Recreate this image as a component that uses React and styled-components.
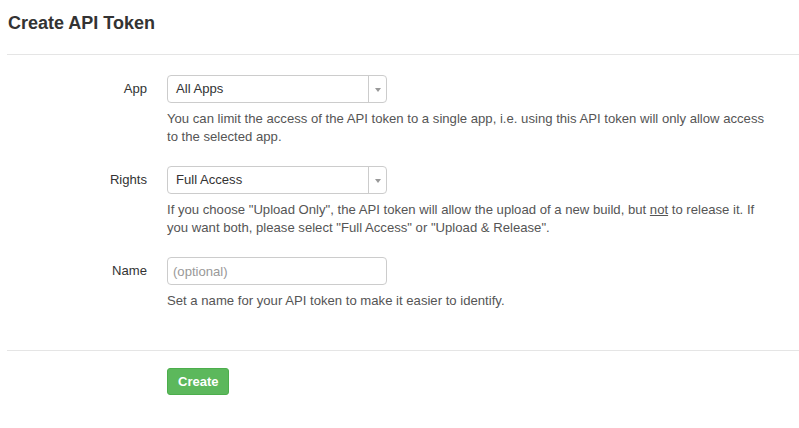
import React from "react";
import styled, { createGlobalStyle } from "styled-components";

const Global = createGlobalStyle`
  html, body { margin: 0; padding: 0; background: #fff; }
  body { font-family: "Liberation Sans", Arial, Helvetica, sans-serif; color: #333; font-size: 13px; }
  * { box-sizing: border-box; }
`;

const Page = styled.div`
  padding: 13px 0 40px 7px;
`;

const Title = styled.h1`
  margin: 0 0 0 1px;
  font-size: 18px;
  line-height: 20px;
  font-weight: bold;
  color: #333;
`;

const Rule = styled.hr`
  margin: ${(p) => p.$top}px 0 0 0;
  border: 0;
  border-top: 1px solid #e5e5e5;
  height: 0;
`;

const Form = styled.div`
  display: flex;
  flex-direction: column;
  gap: 20px;
  padding-top: 20px;
`;

const Group = styled.div`
  display: grid;
  grid-template-columns: 140px 610px;
  column-gap: 20px;
`;

const Label = styled.label`
  text-align: right;
  line-height: 28px;
  font-size: 13.1px;
  color: #333;
`;

const Control = styled.div`
  display: flex;
  flex-direction: column;
  gap: 7px;
`;

const Select = styled.div`
  width: 220px;
  height: 28px;
  border: 1px solid #ccc;
  border-radius: 4px;
  display: flex;
  align-items: stretch;
  background: #fff;
`;

const SelectValue = styled.span`
  flex: 1;
  padding-left: 8px;
  line-height: 26px;
  font-size: 13.1px;
  color: #333;
`;

const Arrow = styled.span`
  width: 18px;
  border-left: 1px solid #ccc;
  display: flex;
  align-items: center;
  justify-content: center;
  &::after {
    content: "";
    border-left: 3px solid transparent;
    border-right: 3px solid transparent;
    border-top: 4px solid #999;
    margin-top: 1px;
  }
`;

const Input = styled.input`
  width: 220px;
  height: 28px;
  border: 1px solid #ccc;
  border-radius: 4px;
  padding: 0 5px;
  font-family: inherit;
  font-size: 13.1px;
  color: #333;
  outline: none;
  &::placeholder { color: #999; }
`;

const Help = styled.p`
  margin: 0;
  font-size: 13.13px;
  line-height: 18px;
  color: #555;
`;

const Under = styled.span`
  text-decoration: underline;
`;

const Actions = styled.div`
  padding: 17px 0 0 160px;
`;

const Button = styled.button`
  height: 27px;
  padding: 0 10px;
  border: 1px solid #4cae4c;
  border-radius: 3px;
  background: #5cb85c;
  color: #fff;
  font-family: inherit;
  font-size: 13px;
  font-weight: bold;
  cursor: pointer;
`;

export default function App() {
  return (
    <>
      <Global />
      <Page>
        <Title>Create API Token</Title>
        <Rule $top={21} />
        <Form>
          <Group>
            <Label>App</Label>
            <Control>
              <Select>
                <SelectValue>All Apps</SelectValue>
                <Arrow />
              </Select>
              <Help>
                You can limit the access of the API token to a single app, i.e. using this API token will only allow access to the selected app.
              </Help>
            </Control>
          </Group>
          <Group>
            <Label>Rights</Label>
            <Control>
              <Select>
                <SelectValue>Full Access</SelectValue>
                <Arrow />
              </Select>
              <Help>
                If you choose "Upload Only", the API token will allow the upload of a new build, but <Under>not</Under> to release it. If you want both, please select "Full Access" or "Upload &amp; Release".
              </Help>
            </Control>
          </Group>
          <Group>
            <Label>Name</Label>
            <Control>
              <Input placeholder="(optional)" />
              <Help>Set a name for your API token to make it easier to identify.</Help>
            </Control>
          </Group>
        </Form>
        <Rule $top={40} />
        <Actions>
          <Button>Create</Button>
        </Actions>
      </Page>
    </>
  );
}
